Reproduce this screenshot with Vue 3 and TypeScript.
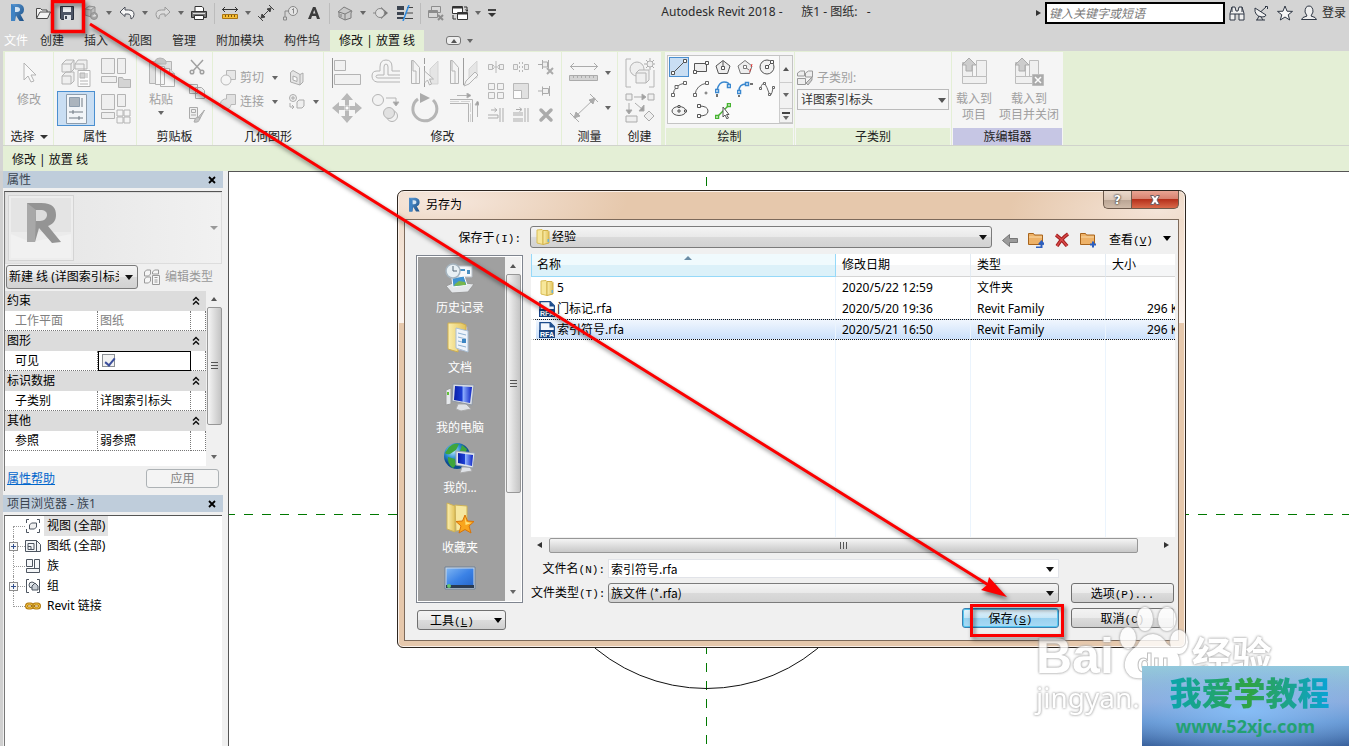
<script setup lang="ts">
import { ref } from 'vue'

interface Tool { icon: string; label: string; caption?: string }
interface QuickItem { kind: 'icon' | 'drop' | 'sep'; icon?: string; label?: string }
interface PropertyRow { name: string; value: string; muted?: boolean; check?: boolean }
interface PropertyGroup { title: string; rows: PropertyRow[] }
interface TreeNode { icon: string; label: string; expandable: boolean; selected?: boolean }
interface FileRow { icon: string; name: string; date: string; type: string; size: string; selected?: boolean }

const icon = (name: string, label: string): QuickItem => ({ kind: 'icon', icon: name, label })
const drop: QuickItem = { kind: 'drop' }
const sep: QuickItem = { kind: 'sep' }

const windowTitle = 'Autodesk Revit 2018 -      族1 - 图纸:   -'

const quick: QuickItem[] = [
  icon('open', '打开'), icon('save', '保存'), icon('sync', '同步'), drop,
  icon('undo', '放弃'), drop, icon('redo', '重做'), drop, icon('print', '打印'), sep,
  icon('measure', '测量'), drop, icon('dim', '对齐尺寸标注'), icon('tag', '标记'), icon('text', '文字'), sep,
  icon('home', '三维视图'), drop, icon('section', '剖面'), icon('thin', '细线'), sep,
  icon('closeviews', '关闭隐藏窗口'), icon('switch', '切换窗口'), drop,
]

const tabs = ['创建', '插入', '视图', '管理', '附加模块', '构件坞']

const account: Tool[] = [
  { icon: 'binoculars', label: '搜索' },
  { icon: 'dish', label: '通讯中心' },
  { icon: 'star', label: '收藏夹' },
  { icon: 'user', label: '用户' },
]

const modifyLarge: Tool[] = [
  { icon: 'align', label: '对齐' }, { icon: 'offset', label: '偏移' },
  { icon: 'mirrorpick', label: '镜像 - 拾取轴' }, { icon: 'mirrordraw', label: '镜像 - 绘制轴' },
  { icon: 'move', label: '移动' }, { icon: 'copy', label: '复制' },
  { icon: 'rotate', label: '旋转' }, { icon: 'trim', label: '修剪/延伸为角' },
]
const modifySmall: Tool[] = [
  { icon: 'split', label: '拆分图元' }, { icon: 'splitgap', label: '用间隙拆分' }, { icon: 'unpin', label: '解锁' },
  { icon: 'array', label: '阵列' }, { icon: 'scale', label: '缩放' }, { icon: 'pin', label: '锁定' },
  { icon: 'trimone', label: '修剪/延伸单个图元' }, { icon: 'trimmany', label: '修剪/延伸多个图元' }, { icon: 'delete', label: '删除' },
]
const drawTools: Tool[] = [
  { icon: 'dline', label: '线' }, { icon: 'drect', label: '矩形' }, { icon: 'dpoly', label: '内接多边形' },
  { icon: 'dpoly2', label: '外接多边形' }, { icon: 'dcircle', label: '圆形' },
  { icon: 'darc', label: '起点-终点-半径弧' }, { icon: 'darc2', label: '圆心-端点弧' }, { icon: 'darc3', label: '相切-端点弧' },
  { icon: 'dfillet', label: '圆角弧' }, { icon: 'dspline', label: '样条曲线' },
  { icon: 'dellipse', label: '椭圆' }, { icon: 'dhalf', label: '半椭圆' }, { icon: 'dpick', label: '拾取线' },
]

const groups: PropertyGroup[] = [
  { title: '约束', rows: [{ name: '工作平面', value: '图纸', muted: true }] },
  { title: '图形', rows: [{ name: '可见', value: '', check: true }] },
  { title: '标识数据', rows: [{ name: '子类别', value: '详图索引标头' }] },
  { title: '其他', rows: [{ name: '参照', value: '弱参照' }] },
]

const tree: TreeNode[] = [
  { icon: 'tview', label: '视图 (全部)', expandable: false, selected: true },
  { icon: 'tsheet', label: '图纸 (全部)', expandable: true },
  { icon: 'tfamily', label: '族', expandable: false },
  { icon: 'tgroup', label: '组', expandable: true },
  { icon: 'tlink', label: 'Revit 链接', expandable: false },
]

const places: Tool[] = [
  { icon: 'history', label: '历史记录', caption: '历史记录' },
  { icon: 'docs', label: '文档', caption: '文档' },
  { icon: 'computer', label: '我的电脑', caption: '我的电脑' },
  { icon: 'network', label: '我的网络', caption: '我的...' },
  { icon: 'favorites', label: '收藏夹', caption: '收藏夹' },
  { icon: 'desktop', label: '桌面' },
]

const files: FileRow[] = [
  { icon: 'folder', name: '5', date: '2020/5/22 12:59', type: '文件夹', size: '' },
  { icon: 'rfa', name: '门标记.rfa', date: '2020/5/20 19:36', type: 'Revit Family', size: '296 KB' },
  { icon: 'rfa', name: '索引符号.rfa', date: '2020/5/21 16:50', type: 'Revit Family', size: '296 KB', selected: true },
]

const visible = ref(true)
const fileName = ref('索引符号.rfa')
const query = ref('')
</script>

<template>
  <div class="app">
    <svg class="sprite" aria-hidden="true">
      <defs>
        <linearGradient id="gFolder" x1="0" x2="1" y1="0" y2="0"><stop offset="0" stop-color="#fbefae" /><stop offset="1" stop-color="#e2c25a" /></linearGradient>
        <linearGradient id="gScreen" x1="0" x2="1" y1="0" y2="0"><stop offset="0" stop-color="#0a1fa8" /><stop offset=".45" stop-color="#1c3fd4" /><stop offset=".5" stop-color="#8fb0ff" /><stop offset="1" stop-color="#0b22c4" /></linearGradient>
        <linearGradient id="gDesk" x1="0" x2="1" y1="0" y2="1"><stop offset="0" stop-color="#7db4f2" /><stop offset=".5" stop-color="#3b82e6" /><stop offset="1" stop-color="#2464c8" /></linearGradient>
        <radialGradient id="gGlobe" cx=".35" cy=".3"><stop offset="0" stop-color="#bfeaff" /><stop offset=".6" stop-color="#2a8ed0" /><stop offset="1" stop-color="#0d4d92" /></radialGradient>
        <linearGradient id="gR" x1="0" x2="1" y1="0" y2="1"><stop offset="0" stop-color="#5d9bd6" /><stop offset="1" stop-color="#1a4f86" /></linearGradient>
      </defs>

      <symbol id="logo" viewBox="0 0 16 20"><path d="M2 1h6c5 0 7 2 7 5.500c0 3-1.500 4.500-3.500 5L15 18h-4.500L7 12.500 6 18H2z" fill="url(#gR)" /><path d="M6 4h2c2 0 3 1 3 2.500S10 9 8 9H6z" fill="#d4e4f2" /><path d="M2 1l4 3v14H2z" fill="#3f83c4" /></symbol>

      <symbol id="open" viewBox="0 0 16 16" fill="#f4f4f4" stroke="#4a4a4a"><path d="M1.500 13V3.500h4l1.500 1.500h5V7" /><path d="M1.500 13.500L5 7h10.500l-3 6.500z" /></symbol>
      <symbol id="save" viewBox="0 0 16 16"><path d="M1.500 1.500h13v13h-12l-1-1z" fill="#4c5566" stroke="#2b3240" /><path d="M4 2h8v5H4z" fill="#eef1f4" /><path d="M5 10h7v5H5z" fill="#dfe3e8" /><path d="M6 11h2v3H6z" fill="#3d4554" /></symbol>
      <symbol id="sync" viewBox="0 0 16 16" fill="#bdbdbd" stroke="#929292"><path d="M2 4l4-3 6 1v7l-4 3-6-2zM2 4l6 1 4-3M8 5v7" /><circle cx="11" cy="11" r="3.500" fill="#a5a5a5" /><path d="M9.500 11h3l-1-1.500" stroke="#eee" /></symbol>
      <symbol id="undo" viewBox="0 0 16 16"><path d="M6 2L1 7l5 4.500V9h3q3 0 3 5 3-1 3-4.500Q15 5 9.500 5H6z" fill="#f6f6f6" stroke="#4a4f58" stroke-linejoin="round" /></symbol>
      <symbol id="redo" viewBox="0 0 16 16"><path d="M10 2l5 5-5 4.500V9H7q-3 0-3 5-3-1-3-4.500Q1 5 6.500 5H10z" fill="#dcdcdc" stroke="#999" stroke-linejoin="round" /></symbol>
      <symbol id="print" viewBox="0 0 16 16" stroke="#333"><path d="M4 6V1.500h7l1.500 1.500V6" fill="#fff" /><path d="M.5 6.500h15v6H.5z" fill="#777" /><path d="M3.500 10.500h9v4h-9z" fill="#fff" /><path d="M2 8.500h12" stroke="#ddd" /></symbol>
      <symbol id="measure" viewBox="0 0 16 16"><path d="M0 4.500h16M3 2L0.500 4.500 3 7M13 2l2.500 2.500L13 7" stroke="#333" fill="none" /><path d="M.5 9.500h15v4H.5z" fill="#f5bd35" stroke="#a97411" /><path d="M3.500 10v2M6.500 10v2M9.500 10v2M12.500 10v2" stroke="#7c560e" /></symbol>
      <symbol id="dim" viewBox="0 0 16 16" stroke="#444" fill="none"><path d="M0 11l5 5M11 0l5 5M3 13L13 3" /><path d="M3 13l1-4 3 3zM13 3L9 4l3 3z" fill="#444" /></symbol>
      <symbol id="tag" viewBox="0 0 16 16" stroke="#888" fill="none"><circle cx="11" cy="6" r="4.500" fill="#e4e4e4" /><path d="M7 6H3v6" /><path d="M1.500 12h3v3h-3zM11.500 3.500v5M10 5l1.500-1.500" /></symbol>
      <symbol id="text" viewBox="0 0 16 16"><path d="M2 14L7 2h2.500L14 14h-3l-1-3H6l-1 3zM7 8.500h2.500L8.200 5z" fill="#3c3c3c" fill-rule="evenodd" /></symbol>
      <symbol id="home" viewBox="0 0 16 16" fill="#c9c9c9" stroke="#7c7c7c"><path d="M1 7l6-5 8 4-1 2v5l-6 2-6-3V7z" /><path d="M2 7l6 2 6-3M8 9v6M4 9v3" fill="none" /></symbol>
      <symbol id="section" viewBox="0 0 16 16"><path d="M8 2v12l7-6z" fill="#777" /><circle cx="7" cy="8" r="4.500" fill="#dedede" stroke="#888" /><path d="M0 8h2" stroke="#888" /></symbol>
      <symbol id="thin" viewBox="0 0 16 16"><path d="M0 1h7v4H0zM0 7h7v3H0zM0 12h7v2H0z" fill="#3c4450" /><path d="M10 2.500h6M9 8h7M8 13.500h8" stroke="#444" /><path d="M12 0L6 16" stroke="#2f8be0" stroke-width="1.500" /></symbol>
      <symbol id="closeviews" viewBox="0 0 16 16" fill="#d8d8d8" stroke="#8d8d8d"><path d="M3.500 1.500h9v6h-9zM.5 5.500h9v7h-9z" /><path d="M.5 7h9" stroke-width="2" /><path d="M10 10l5 5M15 10l-5 5" stroke-width="2" /></symbol>
      <symbol id="switch" viewBox="0 0 16 16" fill="#fff" stroke="#333"><path d="M.5 1.500h10v7H.5zM5.500 7.500h10v7h-10z" /><path d="M1 2.500h9M6 8.500h9" stroke-width="2" /><path d="M12 2h3v4M13.500 4.500L15 6.500 16 4.500M1 10v4h3" fill="none" /></symbol>

      <symbol id="binoculars" viewBox="0 0 16 16" fill="#f0f0f0" stroke="#2f3744"><path d="M1 8.500L3 2h3l1 4h2l1-4h3l2 6.500V15h-5V9H6v6H1zM1 9h5M10 9h5M3 2v5M13 2v5" /></symbol>
      <symbol id="dish" viewBox="0 0 16 16" fill="#eee" stroke="#2f3744"><path d="M2 3q-1 8 7 9 4 0 4-2zM13 2L8 6.500M12 1.500h2.500V4" /><path d="M3 15h9M6 11l-2 4M8 12l2 3" /></symbol>
      <symbol id="star" viewBox="0 0 16 16"><path d="M8 1l2 5.200 5.500.2-4.300 3.400L12.700 15 8 12l-4.700 3 1.500-5.200L.5 6.400 6 6.200z" fill="#f7f7f7" stroke="#2f3744" /></symbol>
      <symbol id="user" viewBox="0 0 16 16" fill="#eee" stroke="#2f3744"><path d="M.5 14.500l1.500-2 4-1.500-2-4q0-6 4-6t4 6l-2 4 4 1.500 1.500 2z" /></symbol>

      <symbol id="pointer" viewBox="0 0 30 30"><path d="M10 6v17l4-4 3 6 3-1-3-6h5z" fill="#fafafa" stroke="#a4a4a4" /></symbol>
      <symbol id="typeprops" viewBox="0 0 30 30" stroke="#a4a4a4" fill="#eee"><path d="M1 6l4-4h8v9l-3 3H1zM14 6l3-4h9v9h-12zM1 18l4-4h8v9l-3 3H1z" /><path d="M1 6h9v8M10 6l3-4M1 18h9v8M14 6h9v8" fill="none" /><path d="M17 12.500h12v16H17z" fill="#fff" /><path d="M19 15h5v5h-5z" fill="#ccc" /><path d="M26 15v5M19 23h8M19 26h8" /></symbol>
      <symbol id="famtypes" viewBox="0 0 30 30" stroke="#a4a4a4" fill="#eee"><path d="M.5.500h13v15H.5zM16.500.500h8v15h-8zM.5 18.500h15v6H.5z" /><path d="M17.500 19.500h4l1 2h7v8h-12z" fill="#ccc" /></symbol>
      <symbol id="props" viewBox="0 0 30 30" stroke="#8d9dad" fill="#f2f5f8"><path d="M5.500.500h20v29h-20z" /><path d="M8.500 3.500h10v9h-10z" fill="#abb4bd" /><path d="M21 4v9M8 18h14M8 24h14M12 16v4M18 22v4" stroke="#707a84" /></symbol>
      <symbol id="famcat" viewBox="0 0 30 30" stroke="#a4a4a4" fill="#eee"><path d="M.5.500h13v15H.5zM16.500.500h8v12h-8zM.5 18.500h13v6H.5z" /><path d="M16 16h6v6h-6zM23 16h6v6h-6zM16 23h6v6h-6zM23 23h6v6h-6z" fill="#f5f5f5" /></symbol>
      <symbol id="paste" viewBox="0 0 30 30" stroke="#a4a4a4" fill="#ddd"><path d="M3.500 4.500h22v22h-22z" /><path d="M9 4q1-3 5-3t6 3v3H9z" fill="#bbb" /><path d="M9.500 9.500h9v18h-9zM14.500 11.500h9l5 5v13h-14z" fill="#f9f9f9" /><path d="M23.500 11.500v5h5" /></symbol>
      <symbol id="cut" viewBox="0 0 16 16" fill="none" stroke="#8c8c8c" stroke-width="1.500"><path d="M2 1l10 11M14 1L4 12" /><circle cx="3" cy="13" r="1.800" /><circle cx="13" cy="13" r="1.800" /></symbol>
      <symbol id="clipcopy" viewBox="0 0 16 16" fill="#eee" stroke="#999"><path d="M.5 1.500h8v9h-8zM6.500 4.500h6l3 3v8h-9z" /></symbol>
      <symbol id="match" viewBox="0 0 16 16" fill="#eee" stroke="#999"><path d="M.5.500h8v11h-8z" /><path d="M2.500 2.500h4v3h-4zM2 8h5" /><path d="M15.500 3l-6 7 1.500 1.500zM9 10q-3 0-4 5 5 1 6-3.500z" fill="#bbb" /></symbol>
      <symbol id="cope" viewBox="0 0 16 16" fill="#e4e4e4" stroke="#aaa"><path d="M6.500.500h9v9h-9z" /><circle cx="6" cy="10" r="5" fill="#f5f5f5" /></symbol>
      <symbol id="joinshape" viewBox="0 0 16 16" fill="#ddd" stroke="#aaa"><path d="M6.500.500h9v10H11A5.300 5.300 0 1 1 6.500 5z" /></symbol>
      <symbol id="wallface" viewBox="0 0 16 16" fill="#e2e2e2" stroke="#999"><path d="M1.500 2.500L4 .5l7 4 3-1.500v9L11 15l-9.500-3z" /><path d="M11 4.500V15M4 6l4 1.500v4L4 10z" fill="#fff" /></symbol>
      <symbol id="demolish" viewBox="0 0 16 16" fill="#eee" stroke="#999"><circle cx="4" cy="4" r="3.500" /><path d="M2 4h4M4 2v4M1 9v4h4M3 11l2 2-2 2" fill="none" /><path d="M8 8l2-2h5v6l-2 2H8z" /></symbol>

      <symbol id="align" viewBox="0 0 30 30" fill="#f1f1f1" stroke="#a4a4a4"><path d="M.5 0v30" stroke="#777" /><path d="M2.500 2.500h11v10h-11zM2.500 16.500h26v10h-26z" /></symbol>
      <symbol id="offset" viewBox="0 0 30 30" fill="none" stroke="#a4a4a4"><path d="M29 13h-8V9q0-7-6-7T9 9v4H6q-5 0-5 5t5 6h23" /><path d="M29 17h-12V9q0-3-2-3t-2 3v8H7q-2 0-2 1.500T7 20h22" /></symbol>
      <symbol id="mirrorpick" viewBox="0 0 30 30" fill="#f4f4f4" stroke="#a4a4a4"><path d="M1.500 25.500v-23h2l6 7v16zM3 3v10h3v13" /><path d="M28 3v23h-8V11z" fill="#e2e2e2" stroke="#ccc" /><path d="M14.500 0v29" stroke-dasharray="6 2" stroke="#888" /><path d="M14.500 13v12l3-3 2 5 2-1-2-5h4z" /></symbol>
      <symbol id="mirrordraw" viewBox="0 0 30 30" fill="#f4f4f4" stroke="#a4a4a4"><path d="M1.500 25.500v-23h2l6 7v16zM3 3v10h3v13" /><path d="M28 3v17h-8V11z" fill="#e2e2e2" stroke="#ccc" /><path d="M14.500 0v27" stroke="#888" /><path d="M15 28l2-5 9-9 3 3-9 9z" /></symbol>
      <symbol id="move" viewBox="0 0 30 30" fill="#a9a9a9"><path d="M15 0l6 7h-4v5h-4V7H9zM15 30l6-7h-4v-5h-4v5H9zM0 15l7-6v4h5v4H7v4zM30 15l-7-6v4h-5v4h5v4z" /><path d="M13 13h4v4h-4z" fill="#fff" stroke="#999" /></symbol>
      <symbol id="copy" viewBox="0 0 30 30" fill="#f2f2f2" stroke="#a4a4a4"><circle cx="7" cy="7" r="5.500" /><circle cx="21" cy="23" r="5.500" /><circle cx="18" cy="20" r="5.500" fill="#ddd" /><path d="M15 5h10v6" fill="none" /><path d="M22 9h6l-3 4z" fill="#888" /></symbol>
      <symbol id="rotate" viewBox="0 0 30 30"><path d="M8 6a12 12 0 1 0 15 1" fill="none" stroke="#a6a6a6" stroke-width="3" /><path d="M10 0l10 5-10 5z" fill="#999" /></symbol>
      <symbol id="trim" viewBox="0 0 30 30" fill="none" stroke="#a4a4a4"><path d="M1 6.500h22.500V29M1 10.500h18.500V29" /><path d="M1 8.500h20.500V29" stroke="#ccc" stroke-dasharray="9 2" /><path d="M8 2.500h11M28.500 24V11" /><path d="M18 0l4 2.500-4 2.500zM26 12l2.500-4 2.500 4z" fill="#888" /></symbol>
      <symbol id="split" viewBox="0 0 16 16" fill="#eee" stroke="#aaa"><path d="M.5 5.500h4v5h-4zM11.500 5.500h4v5h-4z" /><path d="M8 2v12M5.500 8h5M6 6l-2 2 2 2M10 6l2 2-2 2" fill="none" /></symbol>
      <symbol id="splitgap" viewBox="0 0 16 16" fill="#eee" stroke="#aaa"><path d="M.5 5.500h4v5h-4zM11.500 5.500h4v5h-4z" /><path d="M6.500 3v10M9.500 3v10" stroke-dasharray="2 2" /></symbol>
      <symbol id="unpin" viewBox="0 0 16 16" fill="#eee" stroke="#999"><path d="M0 5.500h4M4.500 1v9M4.500 3h5v5h-5M10.500 1v8" /><path d="M9 9l6 6M15 9l-6 6" stroke-width="2" /></symbol>
      <symbol id="array" viewBox="0 0 16 16" fill="#f2f2f2" stroke="#aaa"><path d="M.5.500h6v6h-6zM9.500.500h6v6h-6zM.5 9.500h6v6h-6zM9.500 9.500h6v6h-6z" /></symbol>
      <symbol id="scale" viewBox="0 0 16 16" fill="#ddd" stroke="#aaa"><path d="M.5.500h15v15H.5z" /><path d="M.5 7.500h8v8h-8z" fill="#fff" /></symbol>
      <symbol id="pin" viewBox="0 0 16 16" fill="#eee" stroke="#999"><path d="M0 8h4M4.500 3.500v9M4.500 5.500h6v5h-6M11.500 3v10" /></symbol>
      <symbol id="trimone" viewBox="0 0 16 16" fill="none" stroke="#999"><path d="M0 8h10v3H0M3 3h5M6.500 1L9 3 6.500 5M12 1v14M15 1v14" /></symbol>
      <symbol id="trimmany" viewBox="0 0 16 16" fill="none" stroke="#999"><path d="M0 6h10M0 8h10M0 12h10M0 14h10M3 2.500h5M6.500.500L9 2.500l-2.500 2M12 1v14M15 1v14" /></symbol>
      <symbol id="delete" viewBox="0 0 16 16"><path d="M3 3l10 10M13 3L3 13" stroke="#999" stroke-width="3.500" stroke-linecap="round" /></symbol>
      <symbol id="ruler" viewBox="0 0 30 30" fill="#ccc" stroke="#999"><path d="M1 8.500h28M5 5L1.500 8.500 5 12M25 5l3.500 3.500L25 12" fill="none" /><path d="M.5 17.500h28v5H.5z" /><path d="M4.500 18v2M8.500 18v2M12.500 18v2M16.500 18v2M20.500 18v2M24.500 18v2" /></symbol>
      <symbol id="aligned" viewBox="0 0 30 30" fill="#999" stroke="#999"><path d="M1 20l9 9M21 1l8 8M5 25L26 5" /><path d="M5 25l2-6 4 4zM26 5l-6 2 4 4z" /></symbol>
      <symbol id="creategroup" viewBox="0 0 30 30" fill="#eee" stroke="#a4a4a4"><path d="M6 1H1v28h5M24 29h5V12" fill="none" /><circle cx="12" cy="11" r="7" /><path d="M11 15l3-3h10v10l-3 3H11zM11 15h10v10" /><path d="M25 0v12M19 6h12M21 2l8 8M29 2l-8 8" stroke="#999" /><circle cx="25" cy="6" r="3" /></symbol>
      <symbol id="createsim" viewBox="0 0 30 30" fill="#eee" stroke="#999"><path d="M1 1h6v6H1zM23 1h6v6h-6zM1 23h11v6H1zM24 18l5 5-5 5-5-5z" /><path d="M9 4h10M4 10v8M10 10l7 6" /><path d="M17 1l4 3-4 3zM1 17l3 4 3-4zM19 12v6h-5z" fill="#888" /></symbol>

      <symbol id="dline" viewBox="0 0 16 16" fill="#fff" stroke="#555"><path d="M2 14L14 2" /><path d="M.5 12.500h3v3h-3zM12.500.500h3v3h-3z" /></symbol>
      <symbol id="drect" viewBox="0 0 16 16" fill="#eee" stroke="#555"><path d="M1.500 4.500h12v8h-12z" /><path d="M.5 11.500h3v3h-3zM12.500 2.500h3v3h-3z" fill="#fff" /></symbol>
      <symbol id="dpoly" viewBox="0 0 16 16" fill="#eee" stroke="#555"><path d="M8 1.500L15 7l-2.500 7.500h-9L1 7zM8 2v6" /><path d="M6.500 7.500h3v3h-3z" fill="#fff" /></symbol>
      <symbol id="dpoly2" viewBox="0 0 16 16" fill="#eee" stroke="#777"><path d="M8 1.500L15 7l-2.500 7.500h-9L1 7zM8 8l4 3" /><path d="M6.500 6.500h3v3h-3z" fill="#fff" /><path d="M15 5l-3 10" stroke="#e03030" stroke-dasharray="3 2" /></symbol>
      <symbol id="dcircle" viewBox="0 0 16 16" fill="#f2f2f2" stroke="#555"><circle cx="8" cy="8" r="7" /><path d="M8 8l5-5" /><path d="M6.500 6.500h3v3h-3zM11.500 1.500h3v3h-3z" fill="#fff" /></symbol>
      <symbol id="darc" viewBox="0 0 16 16" fill="none" stroke="#666"><path d="M2 14Q3 4 14 2" /><path d="M.5 12.500h3v3h-3zM12.500.500h3v3h-3zM4 4.500h3v3H4z" fill="#fff" /></symbol>
      <symbol id="darc2" viewBox="0 0 16 16" fill="none" stroke="#666"><path d="M2 14Q3 4 14 2M11.500 12h3M13 10.500v3" /><path d="M.5 12.500h3v3h-3zM12.500.500h3v3h-3z" fill="#fff" /></symbol>
      <symbol id="darc3" viewBox="0 0 16 16" fill="none" stroke="#3b88cf" stroke-width="1.500"><path d="M2 9Q4 1 9 1t5 3" /><path d="M.500 8.500h3v3h-3zM12.500 3.500h3v3h-3z" fill="#fff" /><path d="M2 13v3" stroke="#444" /></symbol>
      <symbol id="dfillet" viewBox="0 0 16 16" fill="none" stroke="#3b88cf" stroke-width="1.500"><path d="M2 10Q2 3 9 3" /><path d="M.5 9.500h3v3h-3zM8.500 1.500h3v3h-3z" fill="#fff" /><path d="M13 3h3M2 14v2" stroke="#444" /></symbol>
      <symbol id="dspline" viewBox="0 0 16 16" fill="none" stroke="#666"><path d="M1 8q3-8 5-5t4 9 4-5" /><path d="M.5 6.500h2v2h-2zM4.500 1.500h2v2h-2zM9.500 12.500h2v2h-2zM13.500 5.500h2v2h-2z" fill="#fff" /></symbol>
      <symbol id="dellipse" viewBox="0 0 16 16" fill="#f4f4f4" stroke="#555"><ellipse cx="8" cy="8" rx="7" ry="4.500" /><path d="M8 6v4M6 8h4" /><path d="M13.500 7h2v2h-2zM7 2.500h2v2H7z" fill="#fff" /></symbol>
      <symbol id="dhalf" viewBox="0 0 16 16" fill="none" stroke="#555"><path d="M6 3q9 0 9 5t-9 5" /><path d="M4.500 1.500h3v3h-3zM4.500 11.500h3v3h-3z" fill="#fff" /></symbol>
      <symbol id="dpick" viewBox="0 0 16 16" fill="#fff" stroke="#46b330" stroke-width="1.500"><path d="M2 14L14 2" /><path d="M.5 12.500h3v3h-3zM12.500.500h3v3h-3z" /><path d="M8 4v10l2-2 2 4 1.500-1-2-3.500H14z" stroke="#555" stroke-width="1" /></symbol>

      <symbol id="subcat" viewBox="0 0 16 16" fill="#eee" stroke="#999"><path d="M.5 3l3-2h4v5h-7zM8.500 3l3-2h4v6h-7zM.5 8.500h8v6h-8z" /><path d="M15 7l-6 6 2 2 4-5z" fill="#ccc" /></symbol>
      <symbol id="edittype" viewBox="0 0 16 16" fill="#f6f6f6" stroke="#999"><path d="M.5 3l2-2h4v4l-2 2h-4zM8.500 3l2-2h4v4h-6zM.5 10l2-2h4v4l-2 2h-4z" /><path d="M8.500 6.500h7v9h-7z" /><path d="M10.500 8.500h3M10.500 11h3M10.500 13h3" /></symbol>
      <symbol id="loadproj" viewBox="0 0 30 30" fill="#f0f0f0" stroke="#b0b0b0"><path d="M3.500 5.500h10v14h-10zM17.500 3.500h10v16h-10zM3.500 19.500h24v7h-24z" /><path d="M10 1l7 7h-4v6H7V8H3z" fill="#c4c4c4" stroke="#999" /></symbol>
      <symbol id="loadclose" viewBox="0 0 30 30" fill="#f0f0f0" stroke="#b0b0b0"><path d="M1.500 5.500h10v14h-10zM15.500 3.500h9v16h-9zM1.500 19.500h22v7h-22z" /><path d="M8 1l7 7h-4v6H5V8H1z" fill="#c4c4c4" stroke="#999" /><path d="M18.500 17.500h11v11h-11z" fill="#999" /><path d="M21 20l6 6M27 20l-6 6" stroke="#fff" stroke-width="1.500" /></symbol>

      <symbol id="tview" viewBox="0 0 16 16" fill="none" stroke="#4d5560"><path d="M4 1.500H1.500V5M1.500 11v3.500H4M12 1.500h2.500V5M14.500 11v3.500H12" /><path d="M4.500 7l2-2h5v4l-2 2h-5z" fill="#f0f0f0" /></symbol>
      <symbol id="tsheet" viewBox="0 0 16 16" fill="#f4f6f8" stroke="#4d5560"><path d="M.5 2.500h11l4 4v7H.5z" /><path d="M11.500 2.500v11M3 5.500h6v6H3zM3 8.500h3v3" fill="none" /></symbol>
      <symbol id="tfamily" viewBox="0 0 16 16" fill="#f4f6f8" stroke="#4d5560"><path d="M1.500 1.500h6v7h-6zM9.500 1.500h5v9h-5zM1.500 10.500h13v4h-13z" /></symbol>
      <symbol id="tgroup" viewBox="0 0 16 16" fill="none" stroke="#4d5560"><path d="M4 1.500H1.500v13H4M12 1.500h2.500v13H12" /><circle cx="7" cy="7" r="3" fill="#e4e8ec" /><path d="M7 8l3-3 3 3v4H7z" fill="#c9cfd6" /></symbol>
      <symbol id="tlink" viewBox="0 0 16 16" fill="none"><g stroke="#b37a12" stroke-width="3"><rect x="1.500" y="6" width="6" height="4" rx="2" /><rect x="8.500" y="6" width="6" height="4" rx="2" /></g><g stroke="#f5c93f"><rect x="1.500" y="6" width="6" height="4" rx="2" /><rect x="8.500" y="6" width="6" height="4" rx="2" /></g><path d="M6 8h4" stroke="#8a5c08" /></symbol>

      <symbol id="folder" viewBox="0 0 16 16"><path d="M2 1l5-.5 1 1v14L2 14z" fill="#f7e79a" stroke="#d9bd57" /><path d="M8 1.500h5l1 1V14l-6 1.500z" fill="url(#gFolder)" stroke="#d0b048" /><path d="M12.500 10h1.500v3h-1.500z" fill="#6bb3d6" /></symbol>
      <symbol id="rfa" viewBox="0 0 16 16"><path d="M1 .500h10l4.500 4.500v8H1z" fill="#f4f8fd" stroke="#1c4c8c" stroke-width="1.500" /><path d="M10.500.500l5 5h-5z" fill="#1c4c8c" /><path d="M0 8h16v8H0z" fill="#17427f" /><text x="8" y="14.500" font-size="7" font-weight="700" font-family="Liberation Sans, sans-serif" text-anchor="middle" fill="#fff">RFA</text></symbol>

      <symbol id="history" viewBox="0 0 32 32"><path d="M2 24l9-4 19 2-6 8-16 1z" fill="#e4e7ea" stroke="#999" /><path d="M14 4h14v11H14z" fill="#f7f9fb" stroke="#b9c1c9" /><path d="M16 7h5v2h-5zM16 11h4M23 8h3v4h-3z" fill="#4a90c2" /><path d="M8 16l12-2 3 9-14 2z" fill="#3f93d0" stroke="#fff" /><path d="M11 22l4-3 6 1 1 3-12 1z" fill="#76b54d" /><circle cx="9" cy="9" r="7" fill="#e8f0f4" stroke="#a5b4bf" stroke-width="1.500" /><path d="M9 4v5h4" stroke="#567" fill="none" /></symbol>
      <symbol id="docs" viewBox="0 0 32 32"><path d="M16 3l7 2v23H12z" fill="#fff" stroke="#aac" /><path d="M4 1h13l5 2v5L14 8v22L4 27z" fill="url(#gFolder)" stroke="#cfae4e" /><path d="M12 6l12 3v21l-12-4z" fill="#eef4fb" stroke="#aabfd4" /><path d="M14 11l8 2M14 15l8 2M14 19l4 1M14 23l8 2" stroke="#8fb2d2" /><path d="M18 17h4v4h-4z" fill="#3d86c4" /></symbol>
      <symbol id="computer" viewBox="0 0 32 32"><path d="M2 8l5-2v16l-5 1z" fill="#e6e9ec" stroke="#999" /><path d="M3 10h2v3H3z" fill="#64c23a" /><path d="M14 22h8l5 5-10 2-5-2z" fill="#dfe2e6" stroke="#aaa" /><path d="M9 2l21 1-2 20-20-4z" fill="#d8dde4" stroke="#8d96a3" /><path d="M11 4l17 1-2 16-16-3z" fill="url(#gScreen)" /></symbol>
      <symbol id="network" viewBox="0 0 32 32"><circle cx="13" cy="14" r="13" fill="url(#gGlobe)" /><path d="M5 5q5-5 10-3l-3 6-6 4q-3 1-5-1zM4 15l7 2 1 6-3 3q-6-4-5-11zM18 3l5 4-2 5-5-3z" fill="#3fa53b" /><path d="M18 25h8l2 4-12 2z" fill="#e0e3e8" stroke="#aaa" /><path d="M12 9l19 2-2 15-17-3z" fill="#dfe4ea" stroke="#98a1ad" /><path d="M14 11l15 2-1 11-14-3z" fill="url(#gScreen)" /></symbol>
      <symbol id="favorites" viewBox="0 0 32 32"><path d="M11 3l12 1v23l-11 2z" fill="#f6e79f" stroke="#cdb258" /><path d="M3 1l8 3v26l-8-3z" fill="url(#gFolder)" stroke="#cdb258" /><path d="M21 13l2.500 6 6.500.500-5 4.500 2 7-6-3.500-6 3.500 2-7-5-4.500 6.500-.5z" fill="#f9a51c" stroke="#d97408" /><path d="M21 15l1.500 5 5 1-6 2z" fill="#ffe27a" /></symbol>
      <symbol id="desktop" viewBox="0 0 32 32"><path d="M1 5h30v22H1z" fill="#ced9e6" stroke="#6f8196" /><path d="M2.500 6.500h27v19h-27z" fill="url(#gDesk)" /><path d="M2 23h28v3H2z" fill="#2b3b52" /><circle cx="5" cy="24" r="2" fill="#67c46f" /></symbol>

      <symbol id="back" viewBox="0 0 16 16"><path d="M.5 8.500l7-6v4h8v4h-8v4z" fill="#9b9b9b" stroke="#777" /></symbol>
      <symbol id="up" viewBox="0 0 16 16"><path d="M.5 12.500v-11h5l1 1.500h8v9.500z" fill="#eeb268" stroke="#a8641c" /><path d="M1 5h13" stroke="#f9d9a5" /><path d="M8 15.500h5.500V11M11 12.500l2.500-3 2.500 3" stroke="#2b5fc0" stroke-width="2" fill="none" /></symbol>
      <symbol id="remove" viewBox="0 0 16 16"><path d="M2 3q6 4 11 11M14 2Q8 6 3 14" stroke="#a32020" stroke-width="3.500" fill="none" /><path d="M2 3q6 4 11 11M14 2Q8 6 3 14" stroke="#d94a4a" stroke-width="1.500" fill="none" /></symbol>
      <symbol id="newfolder" viewBox="0 0 16 16"><path d="M.5 12.500v-11h5l1 1.500h8v9.500z" fill="#eeb268" stroke="#a8641c" /><path d="M1 5h13" stroke="#f9d9a5" /><path d="M10 12.500h6M13 9.500v6" stroke="#2b5fc0" stroke-width="2" /></symbol>
      <symbol id="closex" viewBox="0 0 12 12"><path d="M1.500 1.500h3L6 3.500l1.500-2h3L8 6l2.500 4.500h-3L6 8.500l-1.500 2h-3L4 6z" fill="#fff" stroke="#6b5f66" /></symbol>
    </svg>

    <header class="titlebar">
      <button class="logo" aria-label="Revit"><svg class="logo-mark"><use href="#logo" /></svg></button>
      <template v-for="(item, i) in quick" :key="i">
        <button v-if="item.kind === 'icon'" class="qbtn" :aria-label="item.label"><svg class="i16"><use :href="'#' + item.icon" /></svg></button>
        <button v-else-if="item.kind === 'drop'" class="qdrop" aria-label="更多"><i class="tri" /></button>
        <i v-else class="qsep" />
      </template>
      <button class="qdrop custom" aria-label="自定义快速访问工具栏"><i class="bar" /><i class="tri dark" /></button>
      <h1 class="title">{{ windowTitle }}</h1>
      <i class="play" />
      <input v-model="query" class="search" type="text" placeholder="键入关键字或短语" aria-label="搜索" />
      <button v-for="a in account" :key="a.icon" class="qbtn" :aria-label="a.label"><svg class="i16"><use :href="'#' + a.icon" /></svg></button>
      <a class="login" href="#login">登录</a>
    </header>

    <nav class="tabs">
      <button class="tab file">文件</button>
      <button v-for="t in tabs" :key="t" class="tab">{{ t }}</button>
      <button class="tab active">修改 | 放置 线</button>
      <button class="collapse" aria-label="最小化功能区"><span class="pill"><i class="tri-up" /></span><i class="tri" /></button>
    </nav>

    <section class="ribbon">
      <div class="panel p-select">
        <div class="body">
          <button class="big"><svg class="i30"><use href="#pointer" /></svg><span>修改</span></button>
        </div>
        <div class="cap">选择 <i class="tri dark" /></div>
      </div>
      <div class="panel p-props">
        <div class="body grid-props">
          <button aria-label="类型属性"><svg class="i30"><use href="#typeprops" /></svg></button>
          <button aria-label="族类别"><svg class="i30"><use href="#famtypes" /></svg></button>
          <button class="on" aria-label="属性"><svg class="i30"><use href="#props" /></svg></button>
          <button aria-label="族类型"><svg class="i30"><use href="#famcat" /></svg></button>
        </div>
        <div class="cap">属性</div>
      </div>
      <div class="panel p-clip">
        <div class="body row">
          <button class="big"><svg class="i30"><use href="#paste" /></svg><span>粘贴</span><i class="tri" /></button>
          <div class="stack3">
            <button aria-label="剪切"><svg class="i16"><use href="#cut" /></svg></button>
            <button aria-label="复制"><svg class="i16"><use href="#clipcopy" /></svg></button>
            <button aria-label="匹配"><svg class="i16"><use href="#match" /></svg></button>
          </div>
        </div>
        <div class="cap">剪贴板</div>
      </div>
      <div class="panel p-geo">
        <div class="body grid-geo">
          <button class="wide"><svg class="i16"><use href="#cope" /></svg><span>剪切</span><i class="tri" /></button>
          <button class="wide" aria-label="墙连接"><svg class="i16"><use href="#wallface" /></svg></button>
          <button class="wide"><svg class="i16"><use href="#joinshape" /></svg><span>连接</span><i class="tri" /></button>
          <button class="wide" aria-label="拆除"><svg class="i16"><use href="#demolish" /></svg><i class="tri" /></button>
        </div>
        <div class="cap">几何图形</div>
      </div>
      <div class="panel p-modify">
        <div class="body row">
          <div class="grid-big">
            <button v-for="t in modifyLarge" :key="t.icon" :aria-label="t.label"><svg class="i30"><use :href="'#' + t.icon" /></svg></button>
          </div>
          <div class="grid-small">
            <button v-for="t in modifySmall" :key="t.icon" :aria-label="t.label"><svg class="i16"><use :href="'#' + t.icon" /></svg></button>
          </div>
        </div>
        <div class="cap">修改</div>
      </div>
      <div class="panel p-measure">
        <div class="body stack2">
          <button class="wide" aria-label="测量"><svg class="i30"><use href="#ruler" /></svg><i class="tri" /></button>
          <button class="wide" aria-label="尺寸标注"><svg class="i30"><use href="#aligned" /></svg><i class="tri" /></button>
        </div>
        <div class="cap">测量</div>
      </div>
      <div class="panel p-create">
        <div class="body stack2">
          <button aria-label="创建组"><svg class="i30"><use href="#creategroup" /></svg></button>
          <button aria-label="创建类似"><svg class="i30"><use href="#createsim" /></svg></button>
        </div>
        <div class="cap">创建</div>
      </div>
      <div class="panel p-draw">
        <div class="body">
          <div class="gallery">
            <div class="cells">
              <button v-for="(t, i) in drawTools" :key="t.icon" :class="{ on: i === 0 }" :aria-label="t.label"><svg class="i16"><use :href="'#' + t.icon" /></svg></button>
            </div>
            <div class="gscroll">
              <button aria-label="上一行"><i class="tri-up" /></button>
              <button aria-label="下一行"><i class="tri" /></button>
              <button class="more" aria-label="展开"><i class="bar" /><i class="tri" /></button>
            </div>
          </div>
        </div>
        <div class="cap green">绘制</div>
      </div>
      <div class="panel p-sub">
        <div class="body subbody">
          <label class="sublabel" for="subcategory"><svg class="i16"><use href="#subcat" /></svg>子类别:</label>
          <span class="combo flat"><select id="subcategory"><option>详图索引标头</option></select></span>
        </div>
        <div class="cap green">子类别</div>
      </div>
      <div class="panel p-family">
        <div class="body row">
          <button class="big load"><svg class="i30"><use href="#loadproj" /></svg><span>载入到<br />项目</span></button>
          <button class="big load"><svg class="i30"><use href="#loadclose" /></svg><span>载入到<br />项目并关闭</span></button>
        </div>
        <div class="cap violet">族编辑器</div>
      </div>
    </section>

    <div class="optionsbar">修改 | 放置 线</div>

    <main class="work">
      <aside class="dock">
        <section class="palette">
          <header class="phead"><h2>属性</h2><button aria-label="关闭属性"><svg class="px" viewBox="0 0 8 8"><path d="M1 1l6 6M7 1L1 7" stroke="#000" stroke-width="1.800" /></svg></button></header>
          <div class="pbox">
            <div class="typesel"><div class="thumb"><svg viewBox="0 0 60 60"><path d="M0 0h60v60H0z" fill="#ebebeb" /><path d="M0 0h60v34H0z" fill="#e4e4e4" /><path d="M20 44l40-8v24H0V36z" fill="#f1f1f1" /><path d="M16 5h14c12 0 15 5 15 12 0 6-3 9-8 11l13 16-9 1L28 30l-4 14h-8z" fill="#949494" /><path d="M25 12h4c5 0 7 2 7 5s-3 6-7 6h-4z" fill="#dcdcdc" /><path d="M16 5l9 7-1 32h-8z" fill="#a8a8a8" /></svg></div><i class="tri gray" /></div>
            <div class="typerow">
              <span class="combo grad"><select aria-label="类型"><option>新建 线 (详图索引标头)</option></select></span>
              <button class="edittype" disabled><svg class="i16"><use href="#edittype" /></svg>编辑类型</button>
            </div>
            <div class="gridwrap">
              <table class="props">
                <colgroup><col class="c-name" /><col class="c-val" /><col class="c-btn" /></colgroup>
                <tbody v-for="g in groups" :key="g.title">
                  <tr class="ghead"><th colspan="3" scope="colgroup"><span class="gt">{{ g.title }}<svg class="chev" viewBox="0 0 8 10"><path d="M1 4.500L4 1.500l3 3M1 8.500l3-3 3 3" fill="none" stroke="#111" stroke-width="1.500" /></svg></span></th></tr>
                  <tr v-for="r in g.rows" :key="r.name" :class="{ muted: r.muted }">
                    <td class="pn">{{ r.name }}</td>
                    <td :class="{ focus: r.check }"><input v-if="r.check" v-model="visible" class="tick" type="checkbox" :aria-label="r.name" /><template v-else>{{ r.value }}</template></td>
                    <td />
                  </tr>
                </tbody>
              </table>
              <div class="vscroll"><i class="tri-up" /><div class="thumbbar"><i class="grip" /></div><i class="tri" /></div>
            </div>
            <footer class="pfoot"><a href="#help">属性帮助</a><button class="apply" disabled>应用</button></footer>
          </div>
        </section>
        <section class="browser">
          <header class="phead"><h2>项目浏览器 - 族1</h2><button aria-label="关闭项目浏览器"><svg class="px" viewBox="0 0 8 8"><path d="M1 1l6 6M7 1L1 7" stroke="#000" stroke-width="1.800" /></svg></button></header>
          <ul class="tree">
            <li v-for="n in tree" :key="n.label"><span class="twig"><i v-if="n.expandable" class="plus" /></span><svg class="i16"><use :href="'#' + n.icon" /></svg><span class="node" :class="{ sel: n.selected }">{{ n.label }}</span></li>
          </ul>
        </section>
      </aside>
      <div class="canvas">
        <svg class="drawing" aria-hidden="true">
          <path d="M477.500 5v600" stroke="#007800" stroke-dasharray="9 9" fill="none" />
          <path d="M-3 342.500h1400" stroke="#007800" stroke-dasharray="9 9" fill="none" />
          <circle cx="477.500" cy="342.500" r="174" fill="none" stroke="#111" />
        </svg>
      </div>
    </main>

    <form class="dialog" role="dialog" aria-label="另存为" @submit.prevent>
      <header class="dtitle">
        <svg class="i16"><use href="#logo" /></svg><h2>另存为</h2>
        <button type="button" class="help">?</button><button type="button" class="close" aria-label="关闭"><svg class="cx"><use href="#closex" /></svg></button>
      </header>
      <div class="dbody">
        <div class="lookin">
          <label for="lookin" class="sun">保存于<small>(I):</small></label>
          <span class="combo grad wide-combo"><svg class="i16 lead"><use href="#folder" /></svg><select id="lookin"><option>经验</option></select></span>
          <button type="button" aria-label="后退"><svg class="i16"><use href="#back" /></svg></button>
          <button type="button" aria-label="向上"><svg class="i16"><use href="#up" /></svg></button>
          <button type="button" aria-label="删除"><svg class="i16"><use href="#remove" /></svg></button>
          <button type="button" aria-label="新建文件夹"><svg class="i16"><use href="#newfolder" /></svg></button>
          <button type="button" class="viewmenu sun"><span>查看<small>(<u>V</u>)</small></span><i class="tri black" /></button>
        </div>
        <div class="dcols">
          <div class="dleft">
            <div class="places">
              <ul><li v-for="p in places" :key="p.icon"><svg class="i32" role="img" :aria-label="p.label"><use :href="'#' + p.icon" /></svg><span v-if="p.caption">{{ p.caption }}</span></li></ul>
              <div class="vscroll"><i class="tri-up" /><div class="thumbbar"><i class="grip" /></div><i class="tri" /></div>
            </div>
            <button type="button" class="wbtn tools sun"><span>工具<small>(<u>L</u>)</small></span><i class="tri black" /></button>
          </div>
          <div class="dright">
            <div class="list">
              <table>
                <colgroup><col class="f-name" /><col class="f-date" /><col class="f-type" /><col /></colgroup>
                <thead><tr><th class="sorted">名称<i class="sort" /></th><th>修改日期</th><th>类型</th><th>大小</th></tr></thead>
                <tbody>
                  <tr v-for="f in files" :key="f.name" :class="{ picked: f.selected }">
                    <td class="fn"><span><svg class="i16"><use :href="'#' + f.icon" /></svg>{{ f.name }}</span></td><td>{{ f.date }}</td><td>{{ f.type }}</td><td class="size">{{ f.size }}</td>
                  </tr>
                  <tr class="filler" aria-hidden="true"><td /><td /><td /><td /></tr>
                </tbody>
              </table>
              <div class="hscroll"><i class="tri-left" /><div class="hthumb"><i class="grip" /></div><i class="tri-right" /></div>
            </div>
            <div class="fields">
              <label for="fname" class="sun">文件名<small>(N):</small></label>
              <span class="combo edit sun"><input id="fname" v-model="fileName" type="text" /></span>
              <span />
              <label for="ftype" class="sun">文件类型<small>(T):</small></label>
              <span class="combo grad sun"><select id="ftype"><option>族文件 (*.rfa)</option></select></span>
              <button type="button" class="wbtn sun"><span>选项<small>(P)...</small></span></button>
              <span />
              <button type="submit" class="wbtn primary sun"><span>保存<small>(<u>S</u>)</small></span></button>
              <button type="button" class="wbtn sun"><span>取消<small>(C)</small></span></button>
            </div>
          </div>
        </div>
      </div>
    </form>

    <div class="watermark" aria-hidden="true">
      <div class="wm-top">
        <span class="wm-bai">Bai</span>
        <svg class="paw" viewBox="0 0 70 78"><ellipse cx="27" cy="15" rx="8" ry="12" /><ellipse cx="49" cy="15" rx="9" ry="12" /><ellipse cx="10" cy="34" rx="8" ry="11" /><ellipse cx="61" cy="38" rx="9" ry="12" /><path d="M35 30q8 0 14 10 16 10 12 24-3 12-16 10-9-2-20 0-15 2-18-10-2-12 12-22 6-12 16-12z" /><text x="35" y="68" text-anchor="middle">du</text></svg>
        <span class="wm-cn">经验</span>
      </div>
      <div class="wm-url">jingyan.</div>
    </div>

    <svg class="annotation" aria-hidden="true">
      <g fill="none" stroke="#fb0000">
        <rect x="52.500" y="1.500" width="31" height="30" stroke-width="3.500" />
        <rect x="971.500" y="605.500" width="91" height="30" stroke-width="3" />
        <path d="M90 24L990 586" stroke-width="3" />
      </g>
      <path d="M1007 597l-26-7 6-5 2-8z" fill="#fb0000" />
    </svg>

    <div class="banner"><strong>我爱学教程</strong><span>www.52xjc.com</span></div>
  </div>
</template>

<style>
html, body { background: #d4d4d4; overflow: hidden; }
</style>

<style scoped>
.app, .app * { box-sizing: border-box; }
.app { height: 100vh; display: flex; flex-direction: column; position: relative; overflow: hidden; background: #d4d4d4; font: 12px/16px "Noto Sans", "Noto Sans CJK SC", sans-serif; color: #2b2b2b; }
.sprite { display: block; position: absolute; width: 0; height: 0; }
button, input, select { font: inherit; color: inherit; margin: 0; padding: 0; border: 0; background: none; }
button { display: inline-flex; align-items: center; justify-content: center; white-space: nowrap; }
select { appearance: none; outline: 0; min-width: 0; width: 100%; height: 100%; }
h1, h2 { margin: 0; font: inherit; }
ul { list-style: none; margin: 0; padding: 0; }
table { border-collapse: separate; border-spacing: 0; table-layout: fixed; width: 100%; }
td, th { padding: 0; font-weight: 400; text-align: left; white-space: nowrap; overflow: hidden; }
svg { flex: none; display: block; overflow: visible; }
.i16 { width: 16px; height: 16px; }
.i30 { width: 30px; height: 30px; }
.i32 { width: 32px; height: 32px; }

.tri, .tri-up, .tri-left, .tri-right, .play { flex: none; width: 0; height: 0; border: 3px solid transparent; }
.tri { border-top: 4px solid #666; border-bottom: 0; }
.tri.dark { border-width: 4px 4px 0; border-top-color: #333; }
.tri.black { border-width: 5px 4px 0; border-top-color: #000; }
.tri.gray { border-width: 4px 4px 0; border-top-color: #999; }
.tri-up { border-bottom: 4px solid #555; border-top: 0; }
.tri-left { border-right: 5px solid #333; border-left: 0; }
.tri-right { border-left: 5px solid #333; border-right: 0; }
.bar { width: 8px; height: 2px; background: #444; margin-bottom: 2px; }

.titlebar { display: flex; align-items: center; height: 28px; padding: 0 3px 2px 3px; flex: none; }
.logo { width: 28px; height: 26px; }
.logo-mark { width: 16px; height: 20px; }
.qbtn { width: 24px; height: 24px; flex: none; }
.qdrop { width: 12px; height: 24px; flex: none; }
.custom { width: 16px; flex-direction: column; }
.qsep { width: 1px; height: 21px; background: #bcbcbc; margin: 0 3px; }
.title { flex: 1; text-align: center; white-space: pre; overflow: hidden; line-height: 22px; height: 24px; }
.play { border-left: 5px solid #333; border-right: 0; margin: 0 4px; }
.search { width: 180px; height: 22px; border: 2px solid #000; background: #fff; padding: 0 2px; font-style: italic; flex: none; }
.search::placeholder { color: #777; opacity: 1; }
.login { color: #2b2b2b; text-decoration: none; margin-left: 1px; white-space: nowrap; }

.tabs { display: flex; height: 23px; padding: 2px 0 0 3px; flex: none; }
.tab { padding: 1px 10px 0; height: 21px; }
.tab.file { padding: 1px 2px 0 1px; color: #fff; }
.tab.active { background: #e4efd6; padding: 1px 9px 0; color: #111; }
.collapse { gap: 6px; margin-left: 22px; }
.pill { width: 15px; height: 9px; border: 1px solid #777; border-radius: 3px; background: #eee; display: flex; align-items: center; justify-content: center; }

.ribbon { display: flex; height: 95px; margin-left: 3px; padding: 1px 0 1px 2px; background: #e4efd6; flex: none; gap: 1px; border-bottom: 1px solid #d0d3cc; }
.panel { background: #f5f5f5; display: flex; flex-direction: column; flex: none; height: 93px; color: #a0a0a0; }
.body { flex: 1; min-height: 0; padding-top: 3px; }
.p-select .body svg, .p-props button:not(.on) svg, .p-clip svg, .p-geo svg, .p-modify svg, .p-measure svg, .p-create svg, .p-family svg { opacity: .8; }
.cap { height: 17px; display: flex; align-items: center; justify-content: center; gap: 5px; color: #222; flex: none; }
.cap.green { background: #e4efd6; margin: 0 1px; }
.cap.violet { background: #c6c6e4; margin: 0 1px; }
.row { display: flex; }
.p-select { width: 48px; }
.p-props { width: 82px; }
.p-clip { width: 75px; }
.p-geo { width: 110px; }
.p-modify { width: 237px; }
.p-measure { width: 55px; }
.p-create { width: 43px; }
.p-draw { width: 129px; margin-left: 3px; }
.p-sub { width: 156px; }
.p-family { width: 111px; }
.big { flex-direction: column; width: 48px; justify-content: flex-start; padding-top: 2px; }
.big span { line-height: 16px; margin-top: 5px; }
.big .tri { margin-top: 3px; }
.grid-props { display: grid; grid-template-columns: 38px 38px; grid-template-rows: 35px 35px; padding-left: 3px; gap: 1px 2px; }
.on { background: #c9def3; border: 1px solid #4a8fd0; }
.stack3 { display: grid; grid-template-rows: repeat(3, 24px); width: 24px; }
.grid-geo { display: grid; grid-template-columns: 69px 32px; grid-template-rows: 24px 24px; padding: 14px 0 0 7px; }
.wide { gap: 4px; justify-content: flex-start; }
.wide .tri { margin-left: 4px; }
.grid-big { display: grid; grid-template-columns: repeat(4, 39px); grid-template-rows: 35px 35px; padding-left: 3px; }
.grid-small { display: grid; grid-template-columns: repeat(3, 25px); grid-template-rows: repeat(3, 24px); }
.stack2 { display: grid; grid-template-rows: 35px 35px; padding-left: 7px; justify-content: start; }
.stack2 .wide { gap: 2px; }
.gallery { display: flex; height: 69px; margin: 0 1px 0 2px; border: 1px solid #c4c4c4; background: #fafafa; }
.cells { display: grid; grid-template-columns: repeat(5, 22px); grid-template-rows: repeat(3, 22px); flex: 1; }
.cells button { width: 20px; height: 20px; margin: 1px; }
.gscroll { width: 13px; display: grid; grid-template-rows: 1fr 1fr 14px; border-left: 1px solid #ccc; }
.gscroll button { border-bottom: 1px solid #ccc; background: #f2f2f2; }
.more { flex-direction: column; }
.subbody { padding: 17px 2px 0; }
.sublabel { display: flex; align-items: center; gap: 4px; height: 17px; margin-bottom: 3px; }
.load { width: 44px; }
.load + .load { width: 66px; }
.load span { margin-top: 4px; }

.combo { position: relative; display: flex; align-items: center; min-width: 0; }
.combo::after { content: ""; position: absolute; right: 4px; top: 50%; margin-top: -2px; border: 4px solid transparent; border-top: 5px solid #111; border-bottom: 0; pointer-events: none; }
.combo.flat { height: 21px; border: 1px solid #bbb; background: #f5f5f5; color: #333; }
.combo.flat::after { border-top-color: #555; right: 2px; }
.combo.flat select { padding-left: 3px; }
.combo.grad { border: 1px solid #7b7b7b; border-radius: 3px; background: linear-gradient(#f4f4f4, #e9e9e9 50%, #dadada 51%, #d2d2d2); color: #000; }
.combo.edit { background: #fff; border: 1px solid #e1e3e8; color: #000; }
.combo.edit input { width: 100%; outline: 0; padding-left: 2px; }

.optionsbar { height: 25px; margin-left: 3px; padding: 0 9px; line-height: 27px; background: #e4efd6; color: #111; flex: none; }

.work { flex: 1; min-height: 0; display: flex; background: #f0f0f0; border-left: 3px solid #d0d0d0; }
.dock { width: 220px; flex: none; display: flex; flex-direction: column; color: #000; }
.phead { height: 17px; background: #bfcddb; display: flex; align-items: center; justify-content: space-between; padding: 0 4px; color: #3a4450; flex: none; }
.phead button { width: 14px; height: 14px; }
.px { width: 8px; height: 8px; }
.palette { flex: none; }
.pbox { margin: 3px 1px 4px 1px; border-left: 1px solid #777; border-top: 1px solid #555; }
.typesel { height: 72px; background: linear-gradient(90deg, #e4e4e4, #f1f1f1); border: 1px solid #ddd; display: flex; align-items: center; justify-content: space-between; padding: 0 3px 0 2px; }
.thumb { width: 66px; height: 66px; border: 1px solid #d4d4d4; background: #ededed; padding: 2px; }
.thumb svg { width: 60px; height: 60px; }
.typerow { height: 27px; display: flex; align-items: center; gap: 6px; padding: 0 0 1px 1px; }
.typerow .combo { width: 132px; height: 24px; flex: none; }
.typerow select { padding: 0 18px 0 2px; }
.edittype { gap: 5px; color: #999; }
.gridwrap { display: flex; height: 175px; background: #fff; }
.props { flex: 1; width: auto; height: 160px; }
.c-name { width: 93px; }
.c-val { width: 93px; }
.props tr { height: 20px; }
.props td { border-right: 1px dotted #777; border-bottom: 1px dotted #777; line-height: 19px; padding-left: 2px; height: 20px; }
.props .pn { padding-left: 10px; }
.props th { background: #dcdcdc; line-height: 20px; padding: 0 6px 0 2px; height: 20px; }
.gt { display: flex; align-items: center; justify-content: space-between; }
.chev { width: 8px; height: 10px; }
.muted { color: #808080; }
.props td.focus { outline: 1px solid #000; outline-offset: -1px; padding-left: 4px; }
.tick { appearance: none; display: block; width: 13px; height: 13px; border: 1px solid #8a8f94; background: #f2f2f2; position: relative; }
.tick:checked::after { content: ""; position: absolute; left: 4px; top: 1px; width: 4px; height: 8px; border: solid #3c4f9c; border-width: 0 2px 2px 0; transform: rotate(40deg); }
.vscroll { width: 16px; flex: none; background: #f0f0f0; display: flex; flex-direction: column; align-items: center; padding: 6px 0 7px; gap: 6px; }
.thumbbar { width: 15px; flex: none; height: 118px; border: 1px solid #979797; border-radius: 2px; background: linear-gradient(90deg, #f5f5f5, #dcdcdc 50%, #c4c4c4); display: flex; align-items: center; justify-content: center; }
.vscroll .tri { margin-top: auto; }
.grip { width: 7px; height: 8px; background: repeating-linear-gradient(#555 0 1px, transparent 1px 3px); }
.pfoot { height: 25px; display: flex; align-items: center; justify-content: space-between; padding: 0 3px 0 2px; background: #f0f0f0; }
.pfoot a { color: #0066cc; }
.apply { width: 73px; height: 19px; border: 1px solid #adb2b5; border-radius: 3px; background: #f4f4f4; color: #838383; }
.browser { flex: 1; display: flex; flex-direction: column; min-height: 0; }
.tree { flex: 1; margin: 3px 1px 0 1px; border-left: 1px solid #777; border-top: 1px solid #555; background: #fff; padding-left: 8px; }
.tree li { display: flex; align-items: center; height: 20px; }
.twig { width: 12px; height: 20px; flex: none; position: relative; border-left: 1px dotted #999; background: linear-gradient(90deg, #999 50%, transparent 50%) 0 10px / 2px 1px repeat-x; }
.tree li:first-child .twig { height: 10px; align-self: flex-end; background-position: 0 0; }
.tree li:last-child .twig { height: 11px; align-self: flex-start; }
.plus { position: absolute; left: -5px; top: 6px; width: 9px; height: 9px; border: 1px solid #8c8c8c; background: linear-gradient(#33508c, #33508c) center / 5px 1px no-repeat, linear-gradient(#33508c, #33508c) center / 1px 5px no-repeat, #f7f7f7; }
.node { margin-left: 3px; padding: 0 3px; line-height: 20px; }
.node.sel { background: #e2e2e2; }
.canvas { flex: 1; min-width: 0; margin-left: 5px; border-left: 1px solid #555; border-top: 1px solid #555; background: #fff; overflow: hidden; position: relative; }
.drawing { width: 100%; height: 100%; overflow: hidden; }

.dialog { position: absolute; left: 397px; top: 190px; width: 789px; border: 1px solid #2d2620; border-radius: 7px 7px 6px 6px; padding: 0 6px 6px; background: linear-gradient(#f0dccb, #fbf3ee) left top 28px / 8px 104px no-repeat, linear-gradient(#f0dccb, #fbf3ee) right top 28px / 8px 104px no-repeat, radial-gradient(ellipse 190px 50px at 40px 10px, #f6e8de, transparent) no-repeat, radial-gradient(ellipse 150px 50px at 760px 20px, #f4e4d8, transparent) no-repeat, #e6c8ac; box-shadow: inset 0 0 0 1px #fbf1ea; color: #000; }
.dtitle { height: 28px; display: flex; align-items: center; padding-left: 2px; }
.dtitle h2 { margin-left: 4px; flex: 1; }
.dtitle button { align-self: flex-start; height: 18px; border: 1px solid #6d5a4c; border-top: 0; font: 700 12px/14px "DejaVu Sans", sans-serif; color: #fff; text-shadow: 0 0 2px #333, 0 0 2px #333; }
.dtitle .help { width: 28px; border-radius: 0 0 0 5px; border-right: 0; background: linear-gradient(#ead9cc, #dac5b5 50%, #b9a493 51%, #d0bba9); }
.dtitle .close { width: 48px; border-radius: 0 0 5px 0; background: linear-gradient(#e9a493, #d88270 45%, #b5301b 50%, #d9694a); }
.cx { width: 12px; height: 12px; }
.dbody { border: 1px solid #7d6a5b; background: #f0f0f0; padding: 5px 3px 10px 11px; }
.sun { font-family: "Noto Sans CJK SC", sans-serif; white-space: pre; }
.sun small { font: 11px/12px "Liberation Mono", monospace; }
.lookin { display: flex; gap: 10px; height: 23px; align-items: center; }
.lookin label { width: 105px; text-align: right; line-height: 28px; margin-right: -1px; }
.lookin button { padding-top: 6px; }
.wide-combo { flex: 1; height: 22px; }
.wide-combo .lead { position: absolute; left: 4px; pointer-events: none; }
.wide-combo select { padding-left: 21px; }
.lookin .viewmenu { width: 69px; justify-content: flex-start; padding: 4px 0 0 3px; }
.viewmenu .tri { margin-left: auto; margin-right: 4px; }
.dcols { display: flex; gap: 8px; margin-top: 6px; }
.dleft { width: 107px; display: flex; flex-direction: column; padding-top: 1px; flex: none; }
.places { height: 348px; border: 1px solid #7f858f; display: flex; background: #a0a0a0; box-shadow: inset 0 0 0 1px #fff; overflow: hidden; padding: 1px; }
.places ul { flex: 1; padding: 5px 3px 0 0; }
.places li { height: 60px; display: flex; flex-direction: column; align-items: center; color: #fff; }
.places li span { line-height: 16px; margin-top: 6px; }
.places .thumbbar { height: 219px; width: 15px; }
.places .vscroll { padding-top: 7px; }
.wbtn { height: 20px; border: 1px solid #707070; border-radius: 3px; background: linear-gradient(#f3f3f3, #ebebeb 50%, #dcdcdc 51%, #cfcfcf); color: #000; }
.tools { margin: 7px 17px 0 1px; justify-content: space-between; padding: 0 3px 0 12px; }
.dright { flex: 1; min-width: 0; }
.list { height: 299px; background: #fff; display: flex; flex-direction: column; }
.list table { height: 283px; }
.f-name { width: 305px; }
.f-date { width: 135px; }
.f-type { width: 135px; }
.list th { height: 23px; padding-left: 6px; background: linear-gradient(#fff 50%, #f5f6f7 51%); border-right: 1px solid #e3ebf3; border-bottom: 1px solid #d5d5d5; position: relative; }
.list th.sorted { background: linear-gradient(#f0fafd 50%, #dcf1f9 51%); border: 1px solid #96d9f9; border-top: 0; padding-left: 5px; }
.sort { position: absolute; left: 50%; top: 2px; border: 4px solid transparent; border-top: 0; border-bottom: 4px solid #6a8ca5; }
.list tbody tr { height: 21px; }
.list td { height: 21px; padding: 0 0 0 6px; border-right: 1px solid #ebf4fd; text-overflow: clip; line-height: 18px; }
.list td:last-child, .list th:last-child { border-right: 0; }
.list td.fn { border-left: 5px solid #fff; padding-left: 3px; }
.fn span { display: flex; align-items: center; gap: 2px; }
.list td.size { padding-left: 41px; }
.list .picked td { background: linear-gradient(#f0f6fe, #cbe0fa); border-top: 1px dotted #111; border-bottom: 1px dotted #111; }
.list .filler td { height: auto; }
.list tr.filler { height: auto; }
.hscroll { height: 16px; background: #f0f0f0; display: flex; align-items: center; padding: 0 6px; }
.hthumb { height: 15px; flex: 1; margin: 0 26px 0 7px; border: 1px solid #979797; border-radius: 2px; background: linear-gradient(#f5f5f5, #dedede 50%, #c8c8c8); display: flex; align-items: center; justify-content: center; }
.hthumb .grip { width: 8px; height: 7px; background: repeating-linear-gradient(90deg, #555 0 1px, transparent 1px 3px); }
.fields { display: grid; grid-template-columns: 74px 1fr 104px; grid-template-rows: 19px 20px 21px; row-gap: 5px; column-gap: 0; margin-top: 6px; }
.fields label { text-align: right; line-height: 18px; }
.fields .combo { margin: 0 12px 0 3px; }
.fields .combo select, .fields .combo input { padding-left: 2px; }
.fields .wbtn { margin-right: 1px; }
.fields .primary { width: 97px; justify-self: end; margin-right: 12px; border-color: #3c7fb1; background: linear-gradient(#e5f4fc, #c4e5f6 50%, #98d1ef 51%, #a9dbf6); box-shadow: inset 0 0 0 1px #54c8f0; }

.annotation { position: absolute; inset: 0; width: 100%; height: 100%; pointer-events: none; filter: drop-shadow(2px 3px 2px rgba(0, 0, 0, .5)); }
.watermark { position: absolute; left: 1036px; top: 602px; pointer-events: none; color: #fff; filter: drop-shadow(0 0 1px #999) drop-shadow(0 0 1px #bbb); opacity: .8; }
.wm-top { display: flex; align-items: flex-end; height: 80px; gap: 4px; }
.wm-bai { font: 700 50px/52px "Liberation Sans", sans-serif; }
.paw { width: 70px; height: 78px; fill: #fff; }
.paw text { font: 700 26px "Liberation Sans", sans-serif; fill: #fff; stroke: #b4b4b4; }
.wm-cn { font: 700 40px/56px "Noto Sans CJK SC", sans-serif; }
.wm-url { font: 28px/30px "Noto Sans", sans-serif; }
.banner { position: absolute; right: 0; bottom: 0; width: 207px; height: 80px; display: flex; flex-direction: column; align-items: center; background: radial-gradient(ellipse 75% 60% at 50% 55%, #86bdf6, transparent), linear-gradient(#93c9dc, #8ea5d3 45%, #5d8cc8 70%, #39619c); }
.banner strong { font: 900 32px/40px "Noto Sans CJK SC", sans-serif; margin: 5px 0 0 8px; color: transparent; background: linear-gradient(90deg, #0ba5ae, #2fa344 50%, #08a3d8); background-clip: text; -webkit-background-clip: text; }
.banner span { font: 700 18px/24px "Noto Sans", sans-serif; color: #23a173; margin-top: 3px; }
</style>
